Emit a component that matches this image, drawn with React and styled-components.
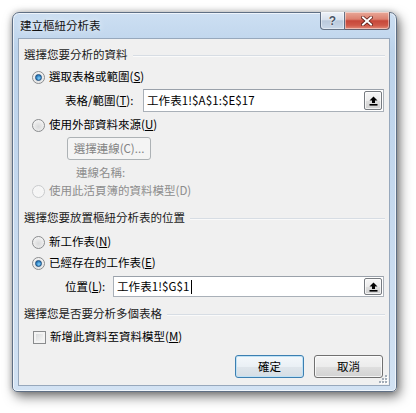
import React from 'react'
import styled, { createGlobalStyle, css } from 'styled-components'

const GlobalStyle = createGlobalStyle`
  html, body {
    margin: 0;
    background: #ffffff;
  }
  body {
    font-family: "Noto Sans CJK TC", "Noto Sans", sans-serif;
    font-size: 11.5px;
    color: #000;
  }
`

const Stage = styled.div`
  width: 416px;
  height: 413px;
  box-sizing: border-box;
  padding: 12px 0 0 12px;
`

const Window = styled.div`
  width: 385px;
  height: 380px;
  box-sizing: border-box;
  display: flex;
  flex-direction: column;
  border: 1px solid #5f6f84;
  border-radius: 7px 7px 5px 5px;
  background: linear-gradient(180deg, #cddff2 0%, #bcd3eb 10%, #c4d8ee 45%, #d2e2f3 100%);
  box-shadow:
    inset 0 0 0 1px rgba(255, 255, 255, 0.65),
    3px 5px 12px rgba(0, 0, 0, 0.5),
    0 0 6px rgba(0, 0, 0, 0.25);
`

const TitleBar = styled.div`
  height: 25px;
  display: flex;
  align-items: flex-start;
  padding-left: 7px;
`

const Title = styled.div`
  flex: 1;
  height: 25px;
  display: flex;
  align-items: center;
  line-height: 1;
  color: #111;
  text-shadow: 0 0 6px rgba(255, 255, 255, 0.9);
`

const Captions = styled.div`
  display: flex;
  margin-right: 6px;
  margin-top: -1px;
`

const CaptionButton = styled.div`
  height: 18px;
  box-sizing: border-box;
  display: flex;
  align-items: center;
  justify-content: center;
  border: 1px solid rgba(58, 74, 98, 0.75);
  border-top: none;
  box-shadow: inset 0 0 0 1px rgba(255, 255, 255, 0.45);
  ${p => p.$close ? css`
    width: 45px;
    border-left: none;
    border-radius: 0 0 4px 0;
    background: linear-gradient(180deg, #e9a898 0%, #dc8170 42%, #c7473a 52%, #cf5848 78%, #e38a78 100%);
  ` : css`
    width: 25px;
    border-radius: 0 0 0 4px;
    background: linear-gradient(180deg, #eef2f8 0%, #d8e1ed 45%, #bac9dc 52%, #cad8e9 100%);
  `}
`

const HelpGlyph = styled.span`
  font-family: "Liberation Sans", sans-serif;
  font-weight: bold;
  font-size: 12px;
  line-height: 1;
  color: #4a5566;
  text-shadow: 0 0 2px #fff, 0 0 1px #fff;
`

const Client = styled.div`
  position: relative;
  flex: 1;
  margin: 0 6px 5px 5px;
  padding: 6px 4px 0 5px;
  display: flex;
  flex-direction: column;
  background: #f0f0f0;
  border: 1px solid #97a8bc;
`

const Header = styled.div`
  height: 20px;
  margin-top: ${p => p.$mt || 0}px;
  display: flex;
  align-items: center;
  gap: 5px;
  line-height: 1;
  color: #1b1b1b;
  &::after {
    content: '';
    flex: 1;
    height: 1px;
    background: #d7dde4;
    box-shadow: 0 1px 0 #fafafa;
  }
`

const Row = styled.div`
  height: ${p => p.$h}px;
  margin-top: ${p => p.$mt || 0}px;
  padding-left: ${p => p.$indent || 0}px;
  display: flex;
  align-items: center;
  line-height: 1;
  color: ${p => p.$disabled ? '#8d8d8d' : '#000'};
`

const Radio = styled.span`
  position: relative;
  width: 13px;
  height: 13px;
  box-sizing: border-box;
  margin-right: 4px;
  border-radius: 50%;
  border: 1px solid ${p => p.$disabled ? '#c9cbcd' : '#8a8c8e'};
  background: ${p => p.$disabled
    ? 'radial-gradient(circle at 50% 50%, #f4f4f4 0%, #f7f7f7 100%)'
    : 'radial-gradient(circle at 50% 60%, #d8d9da 0%, #ececec 55%, #ffffff 100%)'};
  ${p => p.$checked && css`
    &::after {
      content: '';
      position: absolute;
      left: 2px;
      top: 2px;
      width: 7px;
      height: 7px;
      box-sizing: border-box;
      border-radius: 50%;
      border: 1px solid #1e4f7f;
      background: radial-gradient(circle at 60% 65%, #8ad0f6 0%, #2f86c9 55%, #1b5a97 100%);
    }
  `}
`

const Check = styled.span`
  width: 13px;
  height: 13px;
  box-sizing: border-box;
  margin-right: 4px;
  border: 1px solid #8a8c8e;
  background: linear-gradient(135deg, #d2d4d6 0%, #eceded 60%, #fbfbfb 100%);
  box-shadow: inset 0 0 0 2px #f3f3f3;
`

const Key = styled.span`
  text-decoration: underline;
  text-underline-offset: 1px;
`

const Label = styled.span`
  width: ${p => p.$w}px;
  flex: none;
`

const Field = styled.div`
  flex: 1;
  height: 100%;
  box-sizing: border-box;
  margin-right: 1px;
  display: flex;
  align-items: center;
  padding-left: 3px;
  background: #fff;
  border: 1px solid #a9b0b8;
  border-top-color: #9aa1aa;
`

const FieldText = styled.span`
  flex: 1;
  display: flex;
  align-items: center;
  letter-spacing: 0.1px;
`

const Caret = styled.span`
  width: 1px;
  height: 14px;
  margin-left: 1px;
  background: #000;
`

const PickButton = styled.div`
  align-self: stretch;
  width: 18px;
  margin: 1px 1px 1px 0;
  box-sizing: border-box;
  display: flex;
  align-items: center;
  justify-content: center;
  border: 1px solid #777b80;
  border-radius: 2px;
  background: linear-gradient(180deg, #f6f6f6 0%, #ececec 50%, #dedede 51%, #d2d2d2 100%);
  box-shadow: inset 0 0 0 1px rgba(255, 255, 255, 0.7);
`

const PushButton = styled.div`
  width: ${p => p.$w}px;
  height: 100%;
  box-sizing: border-box;
  display: flex;
  align-items: center;
  justify-content: center;
  border-radius: 3px;
  line-height: 1;
  ${p => p.$disabled ? css`
    border: 1px solid #adb2b5;
    background: #f4f4f4;
    color: #838383;
  ` : p.$default ? css`
    border: 1px solid #3c7fb1;
    background: linear-gradient(180deg, #f4f8fb 0%, #eaf0f5 50%, #dfe6ec 51%, #d5dde4 100%);
    box-shadow: inset 0 0 0 1px #bfe1f5;
    color: #000;
  ` : css`
    border: 1px solid #707070;
    background: linear-gradient(180deg, #f4f4f4 0%, #ececec 50%, #dfdfdf 51%, #d2d2d2 100%);
    box-shadow: inset 0 0 0 1px rgba(255, 255, 255, 0.75);
    color: #000;
  `}
`

const Actions = styled.div`
  height: 23px;
  margin-top: 7px;
  padding-right: 2px;
  display: flex;
  justify-content: flex-end;
  gap: 10px;
`

const Grip = styled.svg`
  position: absolute;
  right: 1px;
  bottom: 1px;
`

const CloseIcon = () => (
  <svg width="12" height="10" viewBox="0 0 12 10">
    <path d="M2 1.5 L10 8.5 M10 1.5 L2 8.5" stroke="#5a1c16" strokeWidth="3.6" strokeLinecap="square" />
    <path d="M2 1.5 L10 8.5 M10 1.5 L2 8.5" stroke="#fff" strokeWidth="2" strokeLinecap="square" />
  </svg>
)

const UpIcon = () => (
  <svg width="9" height="10" viewBox="0 0 9 10">
    <path d="M4.5 0.5 L8.5 4.5 H6 V7 H3 V4.5 H0.5 Z" fill="#000" />
    <rect x="0.5" y="8" width="8" height="1.6" fill="#000" />
  </svg>
)

const GripIcon = () => (
  <Grip width="11" height="11" viewBox="0 0 11 11">
    {[[8, 2], [5, 5], [8, 5], [2, 8], [5, 8], [8, 8]].map(([x, y]) => (
      <g key={`${x}-${y}`}>
        <rect x={x + 1} y={y + 1} width="2" height="2" fill="#fff" />
        <rect x={x} y={y} width="2" height="2" fill="#a3adb8" />
      </g>
    ))}
  </Grip>
)

const App = () => {
  return (
    <Stage>
      <GlobalStyle />
      <Window>
        <TitleBar>
          <Title>建立樞紐分析表</Title>
          <Captions>
            <CaptionButton><HelpGlyph>?</HelpGlyph></CaptionButton>
            <CaptionButton $close><CloseIcon /></CaptionButton>
          </Captions>
        </TitleBar>
        <Client>
          <Header>選擇您要分析的資料</Header>
          <Row $h={24} $indent={8}>
            <Radio $checked />
            <span>選取表格或範圍(<Key>S</Key>)</span>
          </Row>
          <Row $h={23} $indent={41}>
            <Label $w={78}>表格/範圍(<Key>T</Key>):</Label>
            <Field>
              <FieldText>工作表1!$A$1:$E$17</FieldText>
              <PickButton><UpIcon /></PickButton>
            </Field>
          </Row>
          <Row $h={22} $mt={2} $indent={8}>
            <Radio />
            <span>使用外部資料來源(<Key>U</Key>)</span>
          </Row>
          <Row $h={23} $mt={1} $indent={43}>
            <PushButton $w={84} $disabled>選擇連線(C)...</PushButton>
          </Row>
          <Row $h={20} $mt={3} $indent={52} $disabled>連線名稱:</Row>
          <Row $h={16} $indent={8} $disabled>
            <Radio $disabled />
            <span>使用此活頁簿的資料模型(D)</span>
          </Row>

          <Header $mt={9}>選擇您要放置樞紐分析表的位置</Header>
          <Row $h={22} $mt={3} $indent={8}>
            <Radio />
            <span>新工作表(<Key>N</Key>)</span>
          </Row>
          <Row $h={20} $indent={8}>
            <Radio $checked />
            <span>已經存在的工作表(<Key>E</Key>)</span>
          </Row>
          <Row $h={21} $mt={3} $indent={41}>
            <Label $w={48}>位置(<Key>L</Key>):</Label>
            <Field>
              <FieldText>工作表1!$G$1<Caret /></FieldText>
              <PickButton><UpIcon /></PickButton>
            </Field>
          </Row>

          <Header $mt={7}>選擇您是否要分析多個表格</Header>
          <Row $h={22} $mt={2} $indent={9}>
            <Check />
            <span>新增此資料至資料模型(<Key>M</Key>)</span>
          </Row>

          <Actions>
            <PushButton $w={69} $default>確定</PushButton>
            <PushButton $w={69}>取消</PushButton>
          </Actions>
          <GripIcon />
        </Client>
      </Window>
    </Stage>
  )
}

export default App
